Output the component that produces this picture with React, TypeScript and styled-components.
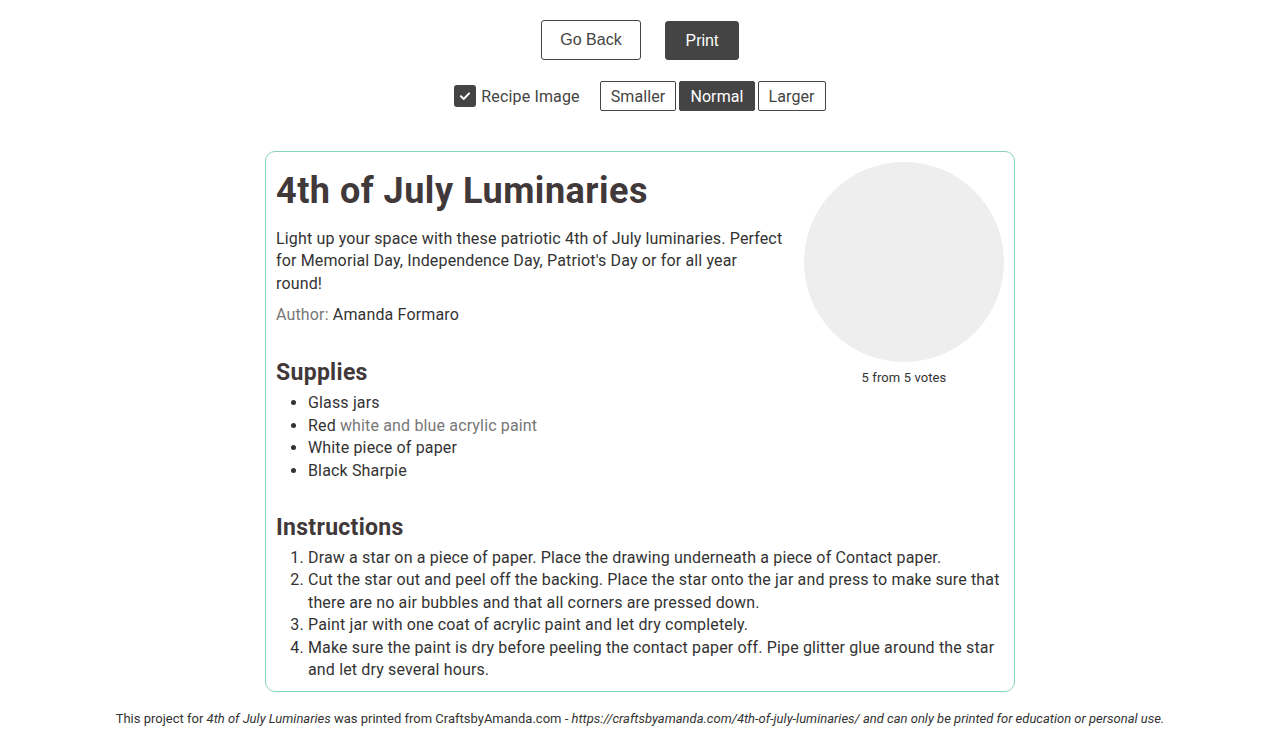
import React from "react";
import styled, { createGlobalStyle } from "styled-components";

const GlobalStyle = createGlobalStyle`
  html, body { margin: 0; padding: 0; background: #fff; }
  body {
    font-family: Roboto, "Open Sans", sans-serif;
    color: #333;
    font-size: 16px;
    letter-spacing: 0.15px;
  }
  * { box-sizing: border-box; }
`;

const Page = styled.div`
  display: flex;
  flex-direction: column;
  align-items: center;
  padding-top: 20px;
`;

const ButtonRow = styled.div`
  display: flex;
  gap: 24px;
  align-items: flex-start;
`;

const TopButton = styled.button<{ $dark?: boolean }>`
  font-family: "Liberation Sans", Arial, sans-serif;
  font-size: 16px;
  letter-spacing: 0;
  width: ${(p) => (p.$dark ? "74px" : "100px")};
  height: ${(p) => (p.$dark ? "39px" : "40px")};
  margin-top: ${(p) => (p.$dark ? "1px" : "0")};
  padding: 0;
  border-radius: 3px;
  border: 1px solid #444;
  background: ${(p) => (p.$dark ? "#444" : "#fff")};
  color: ${(p) => (p.$dark ? "#fff" : "#444")};
  cursor: pointer;
`;

const Controls = styled.div`
  margin-top: 21px;
  display: flex;
  align-items: center;
  height: 30px;
  gap: 20px;
`;

const CheckLabel = styled.label`
  display: flex;
  align-items: center;
  gap: 5px;
  color: #444;
  font-size: 16px;
`;

const CheckBox = styled.span`
  width: 22px;
  height: 22px;
  border-radius: 3px;
  background: #444;
  display: flex;
  align-items: center;
  justify-content: center;
`;

const SizeGroup = styled.div`
  display: flex;
  gap: 3px;
`;

const SizeButton = styled.button<{ $active?: boolean }>`
  font-family: inherit;
  font-size: 16px;
  letter-spacing: 0.1px;
  height: 30px;
  padding: 0 10px;
  border: 1px solid #444;
  border-radius: 2px;
  background: ${(p) => (p.$active ? "#444" : "#fff")};
  color: ${(p) => (p.$active ? "#fff" : "#444")};
  cursor: pointer;
`;

const Card = styled.div`
  margin-top: 40px;
  width: 750px;
  border: 1px solid #84d3c0;
  border-radius: 10px;
  padding: 10px 10px 9px;
  display: flow-root;
`;

const ImageCol = styled.div`
  float: right;
  width: 200px;
  margin-left: 20px;
  text-align: center;
`;

const Circle = styled.div`
  width: 200px;
  height: 200px;
  border-radius: 50%;
  background: #eee;
`;

const Rating = styled.div`
  margin-top: 8px;
  font-size: 13px;
  letter-spacing: 0.1px;
  color: #333;
`;

const Title = styled.h2`
  margin: 10px 0 16px;
  font-size: 36px;
  font-weight: 700;
  letter-spacing: 0.5px;
  color: #41383a;
  line-height: 1.1;
`;

const Summary = styled.p`
  margin: 0;
  line-height: 22.5px;
`;

const Author = styled.div`
  margin-top: 9px;
  line-height: 22.5px;
`;

const Label = styled.span`
  color: #777;
`;

const Section = styled.h3<{ $after?: number }>`
  margin: 32px 0 ${(p) => p.$after ?? 6}px;
  font-size: 23px;
  font-weight: 700;
  letter-spacing: 0.3px;
  color: #41383a;
  line-height: 1.2;
`;

const List = styled.ul`
  margin: 0;
  padding-left: 32px;
  line-height: 22.5px;
`;

const OList = styled.ol`
  margin: 0;
  padding-left: 32px;
  line-height: 22.5px;
`;

const Muted = styled.span`
  color: #777;
`;

const Footer = styled.div`
  margin-top: 19px;
  font-size: 13px;
  letter-spacing: 0;
  color: #333;
  text-align: center;
`;

export default function App() {
  return (
    <>
      <GlobalStyle />
      <Page>
        <ButtonRow>
          <TopButton>Go Back</TopButton>
          <TopButton $dark>Print</TopButton>
        </ButtonRow>
        <Controls>
          <CheckLabel>
            <CheckBox>
              <svg width="14" height="14" viewBox="0 0 24 24" fill="none" stroke="#fff" strokeWidth="3.5" strokeLinecap="round" strokeLinejoin="round">
                <polyline points="5 12.5 10 17 19 7.5" />
              </svg>
            </CheckBox>
            Recipe Image
          </CheckLabel>
          <SizeGroup>
            <SizeButton>Smaller</SizeButton>
            <SizeButton $active>Normal</SizeButton>
            <SizeButton>Larger</SizeButton>
          </SizeGroup>
        </Controls>
        <Card>
          <ImageCol>
            <Circle />
            <Rating>5 from 5 votes</Rating>
          </ImageCol>
          <Title>4th of July Luminaries</Title>
          <Summary>
            Light up your space with these patriotic 4th of July luminaries. Perfect for Memorial Day, Independence Day, Patriot's Day or for all year round!
          </Summary>
          <Author>
            <Label>Author: </Label>Amanda Formaro
          </Author>
          <Section>Supplies</Section>
          <List>
            <li>Glass jars</li>
            <li>
              Red <Muted>white and blue acrylic paint</Muted>
            </li>
            <li>White piece of paper</li>
            <li>Black Sharpie</li>
          </List>
          <Section $after={5}>Instructions</Section>
          <OList>
            <li>Draw a star on a piece of paper. Place the drawing underneath a piece of Contact paper.</li>
            <li>Cut the star out and peel off the backing. Place the star onto the jar and press to make sure that there are no air bubbles and that all corners are pressed down.</li>
            <li>Paint jar with one coat of acrylic paint and let dry completely.</li>
            <li>Make sure the paint is dry before peeling the contact paper off. Pipe glitter glue around the star and let dry several hours.</li>
          </OList>
        </Card>
        <Footer>
          This project for <em>4th of July Luminaries</em> was printed from CraftsbyAmanda.com - <em>https://craftsbyamanda.com/4th-of-july-luminaries/ and can only be printed for education or personal use.</em>
        </Footer>
      </Page>
    </>
  );
}
